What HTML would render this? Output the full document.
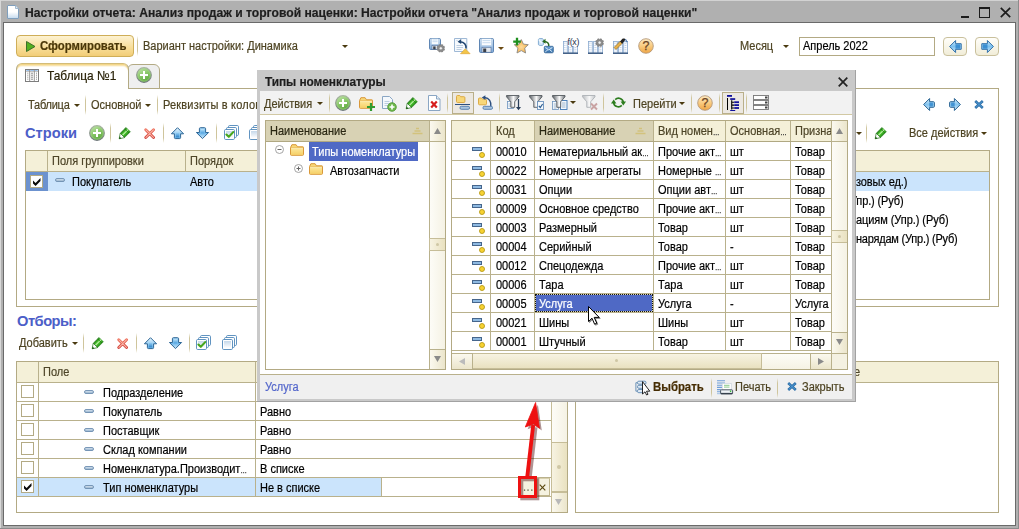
<!DOCTYPE html>
<html lang="ru"><head><meta charset="utf-8"><title>Настройки отчета</title>
<style>
*{box-sizing:border-box;margin:0;padding:0}
html,body{width:1019px;height:529px;overflow:hidden}
body{position:relative;background:#b0b0b0;font-family:"Liberation Sans",sans-serif;font-size:11px;color:#000;line-height:13px}
.a{position:absolute;white-space:nowrap}
.t{position:absolute;white-space:nowrap;height:13px;line-height:13px;font-size:12px;transform:scaleX(0.9167);transform-origin:0 0;-webkit-text-stroke:0.2px}
.hd{color:#4d4528}
.br{color:#4d4322}
.blue{color:#4c5ec8;font-weight:bold}
.hl{position:absolute;height:1px;background:#b9b18c}
.vl{position:absolute;width:1px;background:#b9b18c}
.el{font-size:7px;color:#333;-webkit-text-stroke:0.3px}
.sep{position:absolute;width:1px;background:linear-gradient(rgba(207,197,156,0),#cfc59c 25%,#cfc59c 75%,rgba(207,197,156,0))}
svg{position:absolute;overflow:visible}
</style></head><body>
<div class="a" style="left:0px;top:0px;width:1019px;height:1px;background:#d2d2d2"></div>
<div class="a" style="left:0px;top:0px;width:1px;height:529px;background:#d8d8d8"></div>
<div class="a" style="left:1018px;top:0px;width:1px;height:529px;background:#8c8c8c"></div>
<div class="a" style="left:0px;top:528px;width:1019px;height:1px;background:#8c8c8c"></div>
<div class="a" style="left:3px;top:22px;width:1013px;height:504px;background:#6a6a6a"></div>
<div class="a" style="left:4px;top:23px;width:1011px;height:502px;background:#fff"></div>
<div class="t " style="left:25px;top:6px;font-weight:bold;font-size:13px;transform:scaleX(0.934);color:#1e1e1e">Настройки отчета: Анализ продаж и торговой наценки: Настройки отчета "Анализ продаж и торговой наценки"</div>
<svg style="left:7px;top:5px" width="12" height="14" viewBox="0 0 12 14" ><defs><linearGradient id="gdoc" x1="0" y1="0" x2="0" y2="1"><stop offset="0" stop-color="#fff"/><stop offset="0.500" stop-color="#fff"/><stop offset="1" stop-color="#c4daee"/></linearGradient></defs><path d="M1 0.500h7.500l3 3v9.500q0 0.500 -0.500 0.500h-10q-0.500 0 -0.500-0.500v-12q0-0.500 0.500-0.500z" fill="url(#gdoc)" stroke="#7f9fbd"/><path d="M8.500 0.500v3h3" fill="#dfeaf4" stroke="#8fa9c2" stroke-width="0.800"/></svg>
<div class="a" style="left:961px;top:16px;width:8px;height:2px;background:#1c1c1c"></div>
<div class="a" style="left:979px;top:7px;width:11px;height:11px;border:1px solid #1c1c1c;border-top:2px solid #1c1c1c"></div>
<svg style="left:1000px;top:7px" width="11" height="11" viewBox="0 0 11 11" ><path d="M0.800 0.800l9.400 9.400M10.200 0.800l-9.400 9.400" stroke="#1c1c1c" stroke-width="1.700" fill="none"/></svg>
<div class="a" style="left:16px;top:35px;width:118px;height:22px;border:1px solid #cfae58;border-radius:4px;background:linear-gradient(#fdf2d2,#f8df9c 55%,#f2cd77)"></div>
<svg style="left:26px;top:41px" width="10" height="11" viewBox="0 0 10 11" ><path d="M0.500 0.500v10l8.500-5z" fill="#52b020" stroke="#3c6e2a" stroke-width="1" stroke-linejoin="round"/></svg>
<div class="t " style="left:40px;top:40px;font-weight:bold;font-size:12.4px;color:#4a3708">Сформировать</div>
<div class="sep" style="left:137px;top:36px;height:20px"></div>
<div class="t br" style="left:143px;top:40px;">Вариант настройки: Динамика</div>
<svg style="left:342px;top:45px" width="6" height="3" viewBox="0 0 6 3" ><path d="M0 0h6l-3 3z" fill="#4a3a10"/></svg>
<svg style="left:429px;top:38px" width="17" height="16" viewBox="0 0 17 16" ><defs><linearGradient id="f1" x1="0" y1="0" x2="0" y2="1"><stop offset="0" stop-color="#cfe2f4"/><stop offset="1" stop-color="#7fa9d8"/></linearGradient></defs><rect x="0.5" y="0.5" width="11" height="11" rx="1.2" fill="url(#f1)" stroke="#5f86b4"/><rect x="2.5" y="0.800" width="7" height="5.4" fill="#fbfdff" stroke="#a9c3df" stroke-width="0.5"/><path d="M3.500 2.0h5M3.500 3.7h5" stroke="#b9d2ea" stroke-width="0.8"/><rect x="3" y="7.4" width="6" height="3.8" fill="#e3e8ee" stroke="#54709a" stroke-width="0.6"/><rect x="4.200" y="8.4" width="2.4" height="2.9" fill="#3a3f48"/><path d="M14.02 11.22L15.68 11.91" stroke="#8d8d8d" stroke-width="1.9"/><path d="M12.72 12.52L13.41 14.18" stroke="#8d8d8d" stroke-width="1.9"/><path d="M10.88 12.52L10.19 14.18" stroke="#8d8d8d" stroke-width="1.9"/><path d="M9.58 11.22L7.92 11.91" stroke="#8d8d8d" stroke-width="1.9"/><path d="M9.58 9.38L7.92 8.69" stroke="#8d8d8d" stroke-width="1.9"/><path d="M10.88 8.08L10.19 6.42" stroke="#8d8d8d" stroke-width="1.9"/><path d="M12.72 8.08L13.41 6.42" stroke="#8d8d8d" stroke-width="1.9"/><path d="M14.02 9.38L15.68 8.69" stroke="#8d8d8d" stroke-width="1.9"/><circle cx="11.8" cy="10.3" r="3.3000000000000003" fill="#8d8d8d" stroke="#7a7a7a" stroke-width="0.4"/><circle cx="11.8" cy="10.3" r="1.50" fill="#f2f2f2" stroke="#6f6f6f" stroke-width="0.4"/></svg>
<svg style="left:454px;top:38px" width="17" height="17" viewBox="0 0 17 17" ><path d="M0.5 0.5h12.300v13h-12.300z" fill="#f7fafd" stroke="#9fb9d6"/><path d="M2.500 2.500h1" stroke="#b7c9de"/><path d="M2.500 7.500h6.500M2.500 9.500h6.500M2.500 11.500h5" stroke="#b7c9de" stroke-width="0.9"/><path d="M12 10.500c0.300-4-2.300-6.300-6-6.700" stroke="#1f4470" stroke-width="1.500" fill="none"/><path d="M3.600 3.800l3.600-2.700v5z" fill="#1f4470"/><path d="M11.300 10.800L16.100 15.700H6.500z" fill="#f3c548" stroke="#dba02c" stroke-width="0.600" stroke-linejoin="round"/></svg>
<svg style="left:479px;top:38px" width="15" height="15" viewBox="0 0 15 15" ><defs><linearGradient id="f2" x1="0" y1="0" x2="0" y2="1"><stop offset="0" stop-color="#cfe2f4"/><stop offset="1" stop-color="#7fa9d8"/></linearGradient></defs><rect x="0.5" y="0.5" width="14" height="14" rx="1.2" fill="url(#f2)" stroke="#5f86b4"/><rect x="2.5" y="0.800" width="10" height="6.8" fill="#fbfdff" stroke="#a9c3df" stroke-width="0.5"/><path d="M3.500 2.6h8M3.500 4.7h8" stroke="#b9d2ea" stroke-width="0.8"/><rect x="3" y="9.3" width="9" height="4.9" fill="#e3e8ee" stroke="#54709a" stroke-width="0.6"/><rect x="4.200" y="10.5" width="3.0" height="3.6" fill="#3a3f48"/></svg>
<svg style="left:498px;top:47px" width="6" height="3" viewBox="0 0 6 3" ><path d="M0 0h6l-3 3z" fill="#6b4a12"/></svg>
<svg style="left:512px;top:37px" width="17" height="17" viewBox="0 0 17 17" ><defs><radialGradient id="gstar" cx="0.5" cy="0.55" r="0.6"><stop offset="0" stop-color="#fddc9c"/><stop offset="1" stop-color="#f1a63a"/></radialGradient></defs><path d="M9.300 2.600l2.100 4.500 4.900.600-3.600 3.400.900 4.900-4.300-2.400-4.300 2.400.900-4.900-3.600-3.400 4.900-.600z" fill="url(#gstar)" stroke="#8d8a84" stroke-width="0.9" stroke-linejoin="round"/><path d="M5 0.800v7.600M1.200 4.600h7.600" stroke="#1f8f1f" stroke-width="2.300"/></svg>
<svg style="left:538px;top:38px" width="16" height="16" viewBox="0 0 16 16" ><defs><linearGradient id="genv" x1="0" y1="0" x2="0" y2="1"><stop offset="0" stop-color="#6fa6d8"/><stop offset="1" stop-color="#2f6aa6"/></linearGradient></defs><path d="M0.400 1.400c0-1.200 5-1.200 5 0v5.200c0 1.200-5 1.200-5 0z" fill="#cfe4f6" stroke="#6b9cc9" stroke-width="0.8"/><path d="M0.800 1.600l3 3.600" stroke="#fff" stroke-width="1.200" opacity="0.8"/><path d="M10.800 8.200c0.300-3-1.500-4.600-4.600-4.800" stroke="#2a6a1e" stroke-width="1.500" fill="none"/><path d="M4.200 3.400l3.300-2.600v5z" fill="#2a6a1e"/><rect x="6.300" y="8.300" width="9" height="6.500" rx="1" fill="url(#genv)" stroke="#2f5f92" stroke-width="0.8"/><path d="M7.300 9.500l3.500 2.400 3.500-2.400M7.300 13.800l2.600-2M14.300 13.800l-2.600-2" stroke="#e4f0fb" stroke-width="0.9" fill="none"/></svg>
<svg style="left:563px;top:38px" width="16" height="16" viewBox="0 0 16 16" ><rect x="0.4" y="3.4" width="3.9" height="11.8" fill="#fcfdff" stroke="#88a8cf" stroke-width="0.8"/><path d="M1.4 5.2h1.9" stroke="#9db7d6" stroke-width="0.9" stroke-dasharray="1 0.6"/><path d="M1.4 7.4h1.9" stroke="#9db7d6" stroke-width="0.9" stroke-dasharray="1 0.6"/><path d="M1.4 9.6h1.9" stroke="#9db7d6" stroke-width="0.9" stroke-dasharray="1 0.6"/><path d="M1.4 11.8h1.9" stroke="#9db7d6" stroke-width="0.9" stroke-dasharray="1 0.6"/><path d="M1.4 14.0h1.9" stroke="#9db7d6" stroke-width="0.9" stroke-dasharray="1 0.6"/><rect x="5.6" y="3.4" width="3.9" height="11.8" fill="#fcfdff" stroke="#88a8cf" stroke-width="0.8"/><path d="M6.6 5.2h1.9" stroke="#9db7d6" stroke-width="0.9" stroke-dasharray="1 0.6"/><path d="M6.6 7.4h1.9" stroke="#9db7d6" stroke-width="0.9" stroke-dasharray="1 0.6"/><path d="M6.6 9.6h1.9" stroke="#9db7d6" stroke-width="0.9" stroke-dasharray="1 0.6"/><path d="M6.6 11.8h1.9" stroke="#9db7d6" stroke-width="0.9" stroke-dasharray="1 0.6"/><path d="M6.6 14.0h1.9" stroke="#9db7d6" stroke-width="0.9" stroke-dasharray="1 0.6"/><rect x="10.7" y="3.4" width="3.9" height="11.8" fill="#fcfdff" stroke="#88a8cf" stroke-width="0.8"/><path d="M11.7 5.2h1.9" stroke="#9db7d6" stroke-width="0.9" stroke-dasharray="1 0.6"/><path d="M11.7 7.4h1.9" stroke="#9db7d6" stroke-width="0.9" stroke-dasharray="1 0.6"/><path d="M11.7 9.6h1.9" stroke="#9db7d6" stroke-width="0.9" stroke-dasharray="1 0.6"/><path d="M11.7 11.8h1.9" stroke="#9db7d6" stroke-width="0.9" stroke-dasharray="1 0.6"/><path d="M11.7 14.0h1.9" stroke="#9db7d6" stroke-width="0.9" stroke-dasharray="1 0.6"/><path d="M0 15.2h15" stroke="#2f4f78" stroke-width="1.300"/><rect x="5.200" y="0" width="10.500" height="8" fill="#fff"/><text x="10.300" y="7" text-anchor="middle" font-family="Liberation Sans,sans-serif" font-size="8.800" fill="#1d2f4d" letter-spacing="-0.300">f(x)</text></svg>
<svg style="left:588px;top:38px" width="17" height="16" viewBox="0 0 17 16" ><rect x="0.4" y="3.4" width="3.9" height="11.8" fill="#fcfdff" stroke="#88a8cf" stroke-width="0.8"/><path d="M1.4 5.2h1.9" stroke="#9db7d6" stroke-width="0.9" stroke-dasharray="1 0.6"/><path d="M1.4 7.4h1.9" stroke="#9db7d6" stroke-width="0.9" stroke-dasharray="1 0.6"/><path d="M1.4 9.6h1.9" stroke="#9db7d6" stroke-width="0.9" stroke-dasharray="1 0.6"/><path d="M1.4 11.8h1.9" stroke="#9db7d6" stroke-width="0.9" stroke-dasharray="1 0.6"/><path d="M1.4 14.0h1.9" stroke="#9db7d6" stroke-width="0.9" stroke-dasharray="1 0.6"/><rect x="5.6" y="3.4" width="3.9" height="11.8" fill="#fcfdff" stroke="#88a8cf" stroke-width="0.8"/><path d="M6.6 5.2h1.9" stroke="#9db7d6" stroke-width="0.9" stroke-dasharray="1 0.6"/><path d="M6.6 7.4h1.9" stroke="#9db7d6" stroke-width="0.9" stroke-dasharray="1 0.6"/><path d="M6.6 9.6h1.9" stroke="#9db7d6" stroke-width="0.9" stroke-dasharray="1 0.6"/><path d="M6.6 11.8h1.9" stroke="#9db7d6" stroke-width="0.9" stroke-dasharray="1 0.6"/><path d="M6.6 14.0h1.9" stroke="#9db7d6" stroke-width="0.9" stroke-dasharray="1 0.6"/><rect x="10.7" y="3.4" width="3.9" height="11.8" fill="#fcfdff" stroke="#88a8cf" stroke-width="0.8"/><path d="M11.7 5.2h1.9" stroke="#9db7d6" stroke-width="0.9" stroke-dasharray="1 0.6"/><path d="M11.7 7.4h1.9" stroke="#9db7d6" stroke-width="0.9" stroke-dasharray="1 0.6"/><path d="M11.7 9.6h1.9" stroke="#9db7d6" stroke-width="0.9" stroke-dasharray="1 0.6"/><path d="M11.7 11.8h1.9" stroke="#9db7d6" stroke-width="0.9" stroke-dasharray="1 0.6"/><path d="M11.7 14.0h1.9" stroke="#9db7d6" stroke-width="0.9" stroke-dasharray="1 0.6"/><path d="M0 15.2h15" stroke="#2f4f78" stroke-width="1.300"/><path d="M13.91 5.56L15.57 6.25" stroke="#8d8d8d" stroke-width="1.9"/><path d="M12.56 6.91L13.25 8.57" stroke="#8d8d8d" stroke-width="1.9"/><path d="M10.64 6.91L9.95 8.57" stroke="#8d8d8d" stroke-width="1.9"/><path d="M9.29 5.56L7.63 6.25" stroke="#8d8d8d" stroke-width="1.9"/><path d="M9.29 3.64L7.63 2.95" stroke="#8d8d8d" stroke-width="1.9"/><path d="M10.64 2.29L9.95 0.63" stroke="#8d8d8d" stroke-width="1.9"/><path d="M12.56 2.29L13.25 0.63" stroke="#8d8d8d" stroke-width="1.9"/><path d="M13.91 3.64L15.57 2.95" stroke="#8d8d8d" stroke-width="1.9"/><circle cx="11.6" cy="4.6" r="3.4" fill="#8d8d8d" stroke="#7a7a7a" stroke-width="0.4"/><circle cx="11.6" cy="4.6" r="1.53" fill="#f2f2f2" stroke="#6f6f6f" stroke-width="0.4"/></svg>
<svg style="left:613px;top:38px" width="16" height="16" viewBox="0 0 16 16" ><rect x="0.4" y="3.4" width="3.9" height="11.8" fill="#fcfdff" stroke="#88a8cf" stroke-width="0.8"/><path d="M1.4 5.2h1.9" stroke="#9db7d6" stroke-width="0.9" stroke-dasharray="1 0.6"/><path d="M1.4 7.4h1.9" stroke="#9db7d6" stroke-width="0.9" stroke-dasharray="1 0.6"/><path d="M1.4 9.6h1.9" stroke="#9db7d6" stroke-width="0.9" stroke-dasharray="1 0.6"/><path d="M1.4 11.8h1.9" stroke="#9db7d6" stroke-width="0.9" stroke-dasharray="1 0.6"/><path d="M1.4 14.0h1.9" stroke="#9db7d6" stroke-width="0.9" stroke-dasharray="1 0.6"/><rect x="5.6" y="3.4" width="3.9" height="11.8" fill="#fcfdff" stroke="#88a8cf" stroke-width="0.8"/><path d="M6.6 5.2h1.9" stroke="#9db7d6" stroke-width="0.9" stroke-dasharray="1 0.6"/><path d="M6.6 7.4h1.9" stroke="#9db7d6" stroke-width="0.9" stroke-dasharray="1 0.6"/><path d="M6.6 9.6h1.9" stroke="#9db7d6" stroke-width="0.9" stroke-dasharray="1 0.6"/><path d="M6.6 11.8h1.9" stroke="#9db7d6" stroke-width="0.9" stroke-dasharray="1 0.6"/><path d="M6.6 14.0h1.9" stroke="#9db7d6" stroke-width="0.9" stroke-dasharray="1 0.6"/><rect x="10.7" y="3.4" width="3.9" height="11.8" fill="#fcfdff" stroke="#88a8cf" stroke-width="0.8"/><path d="M11.7 5.2h1.9" stroke="#9db7d6" stroke-width="0.9" stroke-dasharray="1 0.6"/><path d="M11.7 7.4h1.9" stroke="#9db7d6" stroke-width="0.9" stroke-dasharray="1 0.6"/><path d="M11.7 9.6h1.9" stroke="#9db7d6" stroke-width="0.9" stroke-dasharray="1 0.6"/><path d="M11.7 11.8h1.9" stroke="#9db7d6" stroke-width="0.9" stroke-dasharray="1 0.6"/><path d="M11.7 14.0h1.9" stroke="#9db7d6" stroke-width="0.9" stroke-dasharray="1 0.6"/><path d="M0 15.2h15" stroke="#2f4f78" stroke-width="1.300"/><path d="M1 9.5l6.5-6.5 2 2-6.5 6.5z" fill="#e9b24a" stroke="#8c6a2a" stroke-width="0.7"/><path d="M7 3.5l2.2-2.6c1-.8 3-.6 3.4.6l-3.4 4.2z" fill="#222"/><path d="M12.4 1.3l1.8 2.8" stroke="#4f79ad" stroke-width="1.2"/></svg>
<svg style="left:638px;top:38px" width="16" height="16" viewBox="0 0 16 16" ><defs><linearGradient id="gh1" x1="0" y1="0" x2="0" y2="1"><stop offset="0" stop-color="#fdeac3"/><stop offset="0.5" stop-color="#f9cb80"/><stop offset="1" stop-color="#efa544"/></linearGradient></defs><circle cx="8" cy="8" r="7.300" fill="url(#gh1)" stroke="#b59a7c" stroke-width="0.9"/><text x="8" y="12.300" text-anchor="middle" font-family="Liberation Sans,sans-serif" font-size="12.500" fill="#6b4423" stroke="#6b4423" stroke-width="0.250">?</text></svg>
<div class="t br" style="left:740px;top:40px;">Месяц</div>
<svg style="left:783px;top:45px" width="6" height="3" viewBox="0 0 6 3" ><path d="M0 0h6l-3 3z" fill="#4a3a10"/></svg>
<div class="a" style="left:799px;top:37px;width:136px;height:19px;border:1px solid #b3aa84;background:#fff"></div>
<div class="t " style="left:803px;top:40px;">Апрель 2022</div>
<div class="a" style="left:943px;top:37px;width:24px;height:19px;border:1px solid #c9c09c;border-radius:4px;background:linear-gradient(#fffefa,#f1edd8)"></div>
<svg style="left:949px;top:40px" width="13" height="13" viewBox="0 0 13 13" ><defs><linearGradient id="gn2" x1="0" y1="0" x2="0" y2="1"><stop offset="0" stop-color="#c9e9fc"/><stop offset="0.5" stop-color="#7cc0ee"/><stop offset="1" stop-color="#cfeafb"/></linearGradient></defs><path d="M0.600 6.500l6-6v3.200h5.600v5.600h-5.600v3.200z" fill="url(#gn2)" stroke="#2f6fa8" stroke-width="1" stroke-linejoin="round"/><rect x="6.500" y="4.300" width="4.500" height="4.400" fill="#2f86cc" opacity="0.85"/></svg>
<div class="a" style="left:975px;top:37px;width:24px;height:19px;border:1px solid #c9c09c;border-radius:4px;background:linear-gradient(#fffefa,#f1edd8)"></div>
<svg style="left:981px;top:40px" width="13" height="13" viewBox="0 0 13 13" ><defs><linearGradient id="gn3" x1="0" y1="0" x2="0" y2="1"><stop offset="0" stop-color="#c9e9fc"/><stop offset="0.5" stop-color="#7cc0ee"/><stop offset="1" stop-color="#cfeafb"/></linearGradient></defs><path d="M12.400 6.500l-6-6v3.200h-5.600v5.600h5.600v3.200z" fill="url(#gn3)" stroke="#2f6fa8" stroke-width="1" stroke-linejoin="round"/><rect x="2" y="4.300" width="4.500" height="4.400" fill="#2f86cc" opacity="0.85"/></svg>
<div class="a" style="left:16px;top:88px;width:983px;height:219px;border:1px solid #b3aa84;background:#fff"></div>
<div class="a" style="left:127px;top:64px;width:33px;height:25px;border:1px solid #b3aa84;border-radius:6px 6px 0 0;background:#efefef"></div>
<div class="a" style="left:16px;top:63px;width:113px;height:26px;border:1px solid #b3aa84;border-bottom:none;border-top:1px solid #d3bc78;border-radius:6px 6px 0 0;background:#fff;box-shadow:inset 0 1px 0 #f3d68a,inset 0 2px 0 #f8e4b0,inset 0 3px 0 #fdf6e4"></div>
<svg style="left:25px;top:69px" width="14" height="13" viewBox="0 0 14 13" ><rect x="0.5" y="0.5" width="13" height="12" fill="#fff" stroke="#7d7d7d"/><path d="M1.300 1.500h3M5.300 1.500h3.600M9.900 1.500h2.800" stroke="#9cc3ee" stroke-width="1"/><path d="M1 2.500h12" stroke="#a9a9a9" stroke-width="0.700"/><path d="M4.700 1v11M9.300 1v11" stroke="#8a8a8a" stroke-width="0.900"/><path d="M2.300 4.2h1M6 4.2h2M11 4.2h1" stroke="#7f7f7f" stroke-width="0.900"/><path d="M2.300 6.2h1M6 6.2h2M11 6.2h1" stroke="#7f7f7f" stroke-width="0.900"/><path d="M2.300 8.2h1M6 8.2h2M11 8.2h1" stroke="#7f7f7f" stroke-width="0.900"/><path d="M2.300 10.2h1M6 10.2h2M11 10.2h1" stroke="#7f7f7f" stroke-width="0.900"/></svg>
<div class="t " style="left:47px;top:69px;font-size:13px;color:#2a2208">Таблица №1</div>
<svg style="left:136px;top:67px" width="16" height="16" viewBox="0 0 16 16" ><defs><linearGradient id="ga4" x1="0.25" y1="0" x2="0.75" y2="1"><stop offset="0" stop-color="#bfe2a8"/><stop offset="0.45" stop-color="#8ac86a"/><stop offset="1" stop-color="#58a23a"/></linearGradient><linearGradient id="ga4s" x1="0" y1="0" x2="0" y2="1"><stop offset="0" stop-color="#a9b5a2"/><stop offset="1" stop-color="#70787c"/></linearGradient></defs><circle cx="8" cy="8" r="7.3" fill="url(#ga4)" stroke="url(#ga4s)" stroke-width="1.2"/><circle cx="8" cy="8" r="6.2" fill="none" stroke="#a5d68a" stroke-width="0.7" opacity="0.8"/><path d="M7 4h2v3h3v2h-3v3h-2v-3h-3v-2h3z" fill="#fff"/></svg>
<div class="t br" style="left:28px;top:99px;letter-spacing:-0.25px">Таблица</div>
<svg style="left:74px;top:104px" width="6" height="3" viewBox="0 0 6 3" ><path d="M0 0h6l-3 3z" fill="#4a3a10"/></svg>
<div class="sep" style="left:85px;top:95px;height:20px"></div>
<div class="t br" style="left:91px;top:99px;">Основной</div>
<svg style="left:145px;top:104px" width="6" height="3" viewBox="0 0 6 3" ><path d="M0 0h6l-3 3z" fill="#4a3a10"/></svg>
<div class="sep" style="left:157px;top:95px;height:20px"></div>
<div class="t br" style="left:163px;top:99px;letter-spacing:0.2px">Реквизиты в колонках</div>
<div class="t blue" style="left:25px;top:125px;font-size:14.67px;height:16px;line-height:16px;transform:none;-webkit-text-stroke:0">Строки</div>
<svg style="left:89px;top:125px" width="16" height="16" viewBox="0 0 16 16" ><defs><linearGradient id="ga5" x1="0.25" y1="0" x2="0.75" y2="1"><stop offset="0" stop-color="#bfe2a8"/><stop offset="0.45" stop-color="#8ac86a"/><stop offset="1" stop-color="#58a23a"/></linearGradient><linearGradient id="ga5s" x1="0" y1="0" x2="0" y2="1"><stop offset="0" stop-color="#a9b5a2"/><stop offset="1" stop-color="#70787c"/></linearGradient></defs><circle cx="8" cy="8" r="7.3" fill="url(#ga5)" stroke="url(#ga5s)" stroke-width="1.2"/><circle cx="8" cy="8" r="6.2" fill="none" stroke="#a5d68a" stroke-width="0.7" opacity="0.8"/><path d="M7 4h2v3h3v2h-3v3h-2v-3h-3v-2h3z" fill="#fff"/></svg>
<div class="sep" style="left:110px;top:123px;height:20px"></div>
<svg style="left:118px;top:127px" width="13" height="13" viewBox="0 0 13 13" ><defs><linearGradient id="gpn6" gradientUnits="userSpaceOnUse" x1="5.200" y1="3.400" x2="9.500" y2="7.700"><stop offset="0" stop-color="#1d7a12"/><stop offset="0.300" stop-color="#4cc230"/><stop offset="0.480" stop-color="#c9f5b4"/><stop offset="0.620" stop-color="#4cc230"/><stop offset="1" stop-color="#1f8414"/></linearGradient></defs><path d="M8 0.400L12.400 4.800L6.600 10.600L2.200 6.200z" fill="url(#gpn6)" stroke="#1f7a14" stroke-width="0.500"/><path d="M6.700 1.800L11 6.100" stroke="#1d6e12" stroke-width="0.900" opacity="0.750"/><path d="M2.200 6.200L6.600 10.600L1.200 11.800z" fill="#fff" stroke="#1c6a12" stroke-width="0.700" stroke-linejoin="round"/><path d="M1 12L1.700 9.600L3.400 11.400z" fill="#165a0e"/></svg>
<svg style="left:144px;top:128px" width="12" height="12" viewBox="0 0 12 12" ><defs><linearGradient id="gx7" gradientUnits="userSpaceOnUse" x1="0" y1="0" x2="0" y2="12"><stop offset="0" stop-color="#f2705a"/><stop offset="1" stop-color="#c9302c"/></linearGradient></defs><path d="M1.700 1.700l7.900 7.900M9.600 1.700l-7.900 7.900" stroke="url(#gx7)" stroke-width="2.800" stroke-linecap="round" fill="none"/><path d="M1.900 1.900l7.500 7.500M9.400 1.900l-7.500 7.500" stroke="#f7b3a6" stroke-width="1.200" stroke-linecap="round" fill="none"/></svg>
<div class="sep" style="left:163px;top:123px;height:20px"></div>
<svg style="left:171px;top:127px" width="13" height="13" viewBox="0 0 13 13" ><defs><linearGradient id="gu8" x1="0" y1="0" x2="0" y2="1"><stop offset="0" stop-color="#eaf6fe"/><stop offset="0.5" stop-color="#9fd2f4"/><stop offset="1" stop-color="#5aaae4"/></linearGradient><linearGradient id="gu8b" x1="0" y1="0" x2="0" y2="1"><stop offset="0" stop-color="#8fcaf1"/><stop offset="1" stop-color="#2f84c9"/></linearGradient></defs><path d="M6.500 0.700L12.600 6.800H9.600V10.600Q9.600 11.600 8.600 11.600H4.400Q3.400 11.600 3.400 10.600V6.800H0.400z" fill="url(#gu8)" stroke="#2f6796" stroke-width="1" stroke-linejoin="round"/><rect x="4.900" y="6" width="3.200" height="4.300" fill="url(#gu8b)"/></svg>
<svg style="left:196px;top:127px" width="13" height="13" viewBox="0 0 13 13" ><defs><linearGradient id="gd9" x1="0" y1="0" x2="0" y2="1"><stop offset="0" stop-color="#a9d8f6"/><stop offset="0.5" stop-color="#6db6ea"/><stop offset="1" stop-color="#cfeafb"/></linearGradient><linearGradient id="gd9b" x1="0" y1="0" x2="0" y2="1"><stop offset="0" stop-color="#bfe3f9"/><stop offset="1" stop-color="#4c9fdc"/></linearGradient></defs><path d="M6.500 11.600L12.600 5.500H9.600V1.700Q9.600 0.700 8.600 0.700H4.400Q3.400 0.700 3.400 1.700V5.500H0.400z" fill="url(#gd9)" stroke="#2f6796" stroke-width="1" stroke-linejoin="round"/><rect x="4.900" y="2" width="3.200" height="4.300" fill="url(#gd9b)"/></svg>
<div class="sep" style="left:216px;top:123px;height:20px"></div>
<svg style="left:224px;top:125px" width="15" height="15" viewBox="0 0 15 15" ><defs><linearGradient id="gs10" x1="0" y1="0" x2="0" y2="1"><stop offset="0" stop-color="#c5d8ea"/><stop offset="1" stop-color="#fff"/></linearGradient></defs><rect x="4.5" y="0.5" width="10" height="10" rx="1.200" fill="#fff" stroke="#4f88ba" stroke-width="0.900"/><rect x="2.5" y="2.5" width="10" height="10" rx="1.200" fill="#fff" stroke="#4f88ba" stroke-width="0.900"/><rect x="0.5" y="4.5" width="10" height="10" rx="1.200" fill="#fff" stroke="#4f88ba" stroke-width="0.900"/><rect x="2" y="6" width="7" height="7" fill="url(#gs10)"/><path d="M2.400 9.500l2.400 2.300 4.400-4.700" stroke="#46a61c" stroke-width="2.100" fill="none" stroke-linecap="round" stroke-linejoin="round"/></svg>
<svg style="left:249px;top:125px" width="15" height="15" viewBox="0 0 15 15" ><defs><linearGradient id="gs11" x1="0" y1="0" x2="0" y2="1"><stop offset="0" stop-color="#c5d8ea"/><stop offset="1" stop-color="#fff"/></linearGradient></defs><rect x="4.5" y="0.5" width="10" height="10" rx="1.200" fill="#fff" stroke="#4f88ba" stroke-width="0.900"/><rect x="2.5" y="2.5" width="10" height="10" rx="1.200" fill="#fff" stroke="#4f88ba" stroke-width="0.900"/><rect x="0.5" y="4.5" width="10" height="10" rx="1.200" fill="#fff" stroke="#4f88ba" stroke-width="0.900"/><rect x="2" y="6" width="7" height="7" fill="url(#gs11)"/></svg>
<svg style="left:922.5px;top:98px" width="13" height="13" viewBox="0 0 13 13" ><defs><linearGradient id="gp12" x1="0" y1="0" x2="0" y2="1"><stop offset="0" stop-color="#d6eefc"/><stop offset="0.5" stop-color="#86c5ef"/><stop offset="1" stop-color="#d2ebfb"/></linearGradient></defs><path d="M0.600 6.500l6-6v3.200h3.800q1 0 1 1v3.600q0 1 -1 1h-3.800v3.200z" fill="url(#gp12)" stroke="#2c6593" stroke-width="1" stroke-linejoin="round"/><rect x="6.300" y="4.500" width="3.600" height="4" fill="#2f86cc" opacity="0.800"/></svg>
<svg style="left:947.7px;top:98px" width="13" height="13" viewBox="0 0 13 13" ><defs><linearGradient id="gp13" x1="0" y1="0" x2="0" y2="1"><stop offset="0" stop-color="#d6eefc"/><stop offset="0.5" stop-color="#86c5ef"/><stop offset="1" stop-color="#d2ebfb"/></linearGradient></defs><path d="M12.400 6.500l-6-6v3.200h-3.800q-1 0 -1 1v3.600q0 1 1 1h3.800v3.200z" fill="url(#gp13)" stroke="#2c6593" stroke-width="1" stroke-linejoin="round"/><rect x="3.100" y="4.500" width="3.600" height="4" fill="#2f86cc" opacity="0.800"/></svg>
<svg style="left:973.5px;top:100px" width="10" height="9" viewBox="0 0 10 9" ><path d="M1.200 1l7.600 7M8.800 1l-7.600 7" stroke="#2f6fa8" stroke-width="2.600" fill="none"/><path d="M1.600 1.400l6.800 6.200M8.400 1.400l-6.800 6.200" stroke="#4f9bd6" stroke-width="1" fill="none"/></svg>
<svg style="left:856px;top:132px" width="6" height="3" viewBox="0 0 6 3" ><path d="M0 0h6l-3 3z" fill="#4a3a10"/></svg>
<div class="sep" style="left:866px;top:123px;height:20px"></div>
<svg style="left:874px;top:127px" width="13" height="13" viewBox="0 0 13 13" ><defs><linearGradient id="gpn14" gradientUnits="userSpaceOnUse" x1="5.200" y1="3.400" x2="9.500" y2="7.700"><stop offset="0" stop-color="#1d7a12"/><stop offset="0.300" stop-color="#4cc230"/><stop offset="0.480" stop-color="#c9f5b4"/><stop offset="0.620" stop-color="#4cc230"/><stop offset="1" stop-color="#1f8414"/></linearGradient></defs><path d="M8 0.400L12.400 4.800L6.600 10.600L2.200 6.200z" fill="url(#gpn14)" stroke="#1f7a14" stroke-width="0.500"/><path d="M6.700 1.800L11 6.100" stroke="#1d6e12" stroke-width="0.900" opacity="0.750"/><path d="M2.200 6.200L6.600 10.600L1.200 11.800z" fill="#fff" stroke="#1c6a12" stroke-width="0.700" stroke-linejoin="round"/><path d="M1 12L1.700 9.600L3.400 11.400z" fill="#165a0e"/></svg>
<div class="t br" style="left:909px;top:127px;">Все действия</div>
<svg style="left:981px;top:132px" width="6" height="3" viewBox="0 0 6 3" ><path d="M0 0h6l-3 3z" fill="#4a3a10"/></svg>
<div class="a" style="left:25px;top:150px;width:965px;height:150px;border:1px solid #b3aa84;background:#fff"></div>
<div class="a" style="left:26px;top:151px;width:963px;height:20px;background:#f4f0d8"></div>
<div class="hl" style="left:26px;top:171px;width:963px;"></div>
<div class="a" style="left:26px;top:172px;width:963px;height:19px;background:#cbe4fc"></div>
<div class="a" style="left:26px;top:172px;width:22px;height:19px;background:#6c92cf"></div>
<div class="a" style="left:30px;top:175px;width:13px;height:13px;background:#fff;border:1px solid #b3aa84"></div>
<svg style="left:32.7px;top:177.5px" width="8" height="8" viewBox="0 0 8 8" ><path d="M0 2.500L2.600 5L7.500 0V3L2.600 7.900L0 5.400z" fill="#0a0a0a"/></svg>
<div class="vl" style="left:47px;top:151px;height:20px;"></div>
<div class="vl" style="left:185px;top:151px;height:20px;"></div>
<div class="t hd" style="left:52px;top:155px;">Поля группировки</div>
<div class="t hd" style="left:190px;top:155px;">Порядок</div>
<svg style="left:55px;top:178px" width="10" height="4" viewBox="0 0 10 4" ><defs><linearGradient id="gdash" x1="0" y1="0" x2="0" y2="1"><stop offset="0" stop-color="#dfeaf4"/><stop offset="1" stop-color="#8fadc9"/></linearGradient></defs><rect x="0.5" y="0.5" width="9" height="3" rx="1.500" fill="url(#gdash)" stroke="#6c8db0" stroke-width="0.9"/></svg>
<div class="t " style="left:72px;top:176px;">Покупатель</div>
<div class="t " style="left:190px;top:176px;">Авто</div>
<div class="t " style="left:855.5px;top:176px;letter-spacing:-0.12px">зовых ед.)</div>
<div class="t " style="left:849.5px;top:195px;letter-spacing:-0.15px">Упр.) (Руб)</div>
<div class="t " style="left:855.5px;top:214px;letter-spacing:-0.07px">ациям (Упр.) (Руб)</div>
<div class="t " style="left:855.5px;top:233px;letter-spacing:-0.24px">нарядам (Упр.) (Руб)</div>
<div class="t blue" style="left:17px;top:313px;font-size:14.67px;letter-spacing:-0.5px;height:16px;line-height:16px;transform:none;-webkit-text-stroke:0">Отборы:</div>
<div class="t br" style="left:19px;top:337px;">Добавить</div>
<svg style="left:72px;top:342px" width="6" height="3" viewBox="0 0 6 3" ><path d="M0 0h6l-3 3z" fill="#4a3a10"/></svg>
<div class="sep" style="left:83px;top:333px;height:20px"></div>
<svg style="left:91px;top:337px" width="13" height="13" viewBox="0 0 13 13" ><defs><linearGradient id="gpn15" gradientUnits="userSpaceOnUse" x1="5.200" y1="3.400" x2="9.500" y2="7.700"><stop offset="0" stop-color="#1d7a12"/><stop offset="0.300" stop-color="#4cc230"/><stop offset="0.480" stop-color="#c9f5b4"/><stop offset="0.620" stop-color="#4cc230"/><stop offset="1" stop-color="#1f8414"/></linearGradient></defs><path d="M8 0.400L12.400 4.800L6.600 10.600L2.200 6.200z" fill="url(#gpn15)" stroke="#1f7a14" stroke-width="0.500"/><path d="M6.700 1.800L11 6.100" stroke="#1d6e12" stroke-width="0.900" opacity="0.750"/><path d="M2.200 6.200L6.600 10.600L1.200 11.800z" fill="#fff" stroke="#1c6a12" stroke-width="0.700" stroke-linejoin="round"/><path d="M1 12L1.700 9.600L3.400 11.400z" fill="#165a0e"/></svg>
<svg style="left:117px;top:338px" width="12" height="12" viewBox="0 0 12 12" ><defs><linearGradient id="gx16" gradientUnits="userSpaceOnUse" x1="0" y1="0" x2="0" y2="12"><stop offset="0" stop-color="#f2705a"/><stop offset="1" stop-color="#c9302c"/></linearGradient></defs><path d="M1.700 1.700l7.900 7.900M9.600 1.700l-7.900 7.900" stroke="url(#gx16)" stroke-width="2.800" stroke-linecap="round" fill="none"/><path d="M1.900 1.900l7.500 7.500M9.400 1.900l-7.500 7.500" stroke="#f7b3a6" stroke-width="1.200" stroke-linecap="round" fill="none"/></svg>
<div class="sep" style="left:136px;top:333px;height:20px"></div>
<svg style="left:144px;top:337px" width="13" height="13" viewBox="0 0 13 13" ><defs><linearGradient id="gu17" x1="0" y1="0" x2="0" y2="1"><stop offset="0" stop-color="#eaf6fe"/><stop offset="0.5" stop-color="#9fd2f4"/><stop offset="1" stop-color="#5aaae4"/></linearGradient><linearGradient id="gu17b" x1="0" y1="0" x2="0" y2="1"><stop offset="0" stop-color="#8fcaf1"/><stop offset="1" stop-color="#2f84c9"/></linearGradient></defs><path d="M6.500 0.700L12.600 6.800H9.600V10.600Q9.600 11.600 8.600 11.600H4.400Q3.400 11.600 3.400 10.600V6.800H0.400z" fill="url(#gu17)" stroke="#2f6796" stroke-width="1" stroke-linejoin="round"/><rect x="4.900" y="6" width="3.200" height="4.300" fill="url(#gu17b)"/></svg>
<svg style="left:169px;top:337px" width="13" height="13" viewBox="0 0 13 13" ><defs><linearGradient id="gd18" x1="0" y1="0" x2="0" y2="1"><stop offset="0" stop-color="#a9d8f6"/><stop offset="0.5" stop-color="#6db6ea"/><stop offset="1" stop-color="#cfeafb"/></linearGradient><linearGradient id="gd18b" x1="0" y1="0" x2="0" y2="1"><stop offset="0" stop-color="#bfe3f9"/><stop offset="1" stop-color="#4c9fdc"/></linearGradient></defs><path d="M6.500 11.600L12.600 5.500H9.600V1.700Q9.600 0.700 8.600 0.700H4.400Q3.400 0.700 3.400 1.700V5.500H0.400z" fill="url(#gd18)" stroke="#2f6796" stroke-width="1" stroke-linejoin="round"/><rect x="4.900" y="2" width="3.200" height="4.300" fill="url(#gd18b)"/></svg>
<div class="sep" style="left:189px;top:333px;height:20px"></div>
<svg style="left:196px;top:335px" width="15" height="15" viewBox="0 0 15 15" ><defs><linearGradient id="gs19" x1="0" y1="0" x2="0" y2="1"><stop offset="0" stop-color="#c5d8ea"/><stop offset="1" stop-color="#fff"/></linearGradient></defs><rect x="4.5" y="0.5" width="10" height="10" rx="1.200" fill="#fff" stroke="#4f88ba" stroke-width="0.900"/><rect x="2.5" y="2.5" width="10" height="10" rx="1.200" fill="#fff" stroke="#4f88ba" stroke-width="0.900"/><rect x="0.5" y="4.5" width="10" height="10" rx="1.200" fill="#fff" stroke="#4f88ba" stroke-width="0.900"/><rect x="2" y="6" width="7" height="7" fill="url(#gs19)"/><path d="M2.400 9.500l2.400 2.300 4.400-4.700" stroke="#46a61c" stroke-width="2.100" fill="none" stroke-linecap="round" stroke-linejoin="round"/></svg>
<svg style="left:222px;top:335px" width="15" height="15" viewBox="0 0 15 15" ><defs><linearGradient id="gs20" x1="0" y1="0" x2="0" y2="1"><stop offset="0" stop-color="#c5d8ea"/><stop offset="1" stop-color="#fff"/></linearGradient></defs><rect x="4.5" y="0.5" width="10" height="10" rx="1.200" fill="#fff" stroke="#4f88ba" stroke-width="0.900"/><rect x="2.5" y="2.5" width="10" height="10" rx="1.200" fill="#fff" stroke="#4f88ba" stroke-width="0.900"/><rect x="0.5" y="4.5" width="10" height="10" rx="1.200" fill="#fff" stroke="#4f88ba" stroke-width="0.900"/><rect x="2" y="6" width="7" height="7" fill="url(#gs20)"/></svg>
<div class="a" style="left:16px;top:361px;width:552px;height:152px;border:1px solid #b3aa84;background:#fff"></div>
<div class="a" style="left:17px;top:362px;width:550px;height:20px;background:#f4f0d8"></div>
<div class="hl" style="left:17px;top:382px;width:550px;"></div>
<div class="t hd" style="left:43px;top:366px;">Поле</div>
<div class="vl" style="left:38px;top:362px;height:135px;"></div>
<div class="vl" style="left:255px;top:362px;height:135px;"></div>
<div class="hl" style="left:17px;top:401px;width:534px;"></div>
<div class="a" style="left:21px;top:385px;width:13px;height:13px;background:#fff;border:1px solid #b3aa84"></div>
<svg style="left:84px;top:390px" width="10" height="4" viewBox="0 0 10 4" ><defs><linearGradient id="gdash" x1="0" y1="0" x2="0" y2="1"><stop offset="0" stop-color="#dfeaf4"/><stop offset="1" stop-color="#8fadc9"/></linearGradient></defs><rect x="0.5" y="0.5" width="9" height="3" rx="1.500" fill="url(#gdash)" stroke="#6c8db0" stroke-width="0.9"/></svg>
<div class="t " style="left:103px;top:387px;">Подразделение</div>
<div class="t " style="left:260px;top:387px;">Равно</div>
<div class="hl" style="left:17px;top:420px;width:534px;"></div>
<div class="a" style="left:21px;top:404px;width:13px;height:13px;background:#fff;border:1px solid #b3aa84"></div>
<svg style="left:84px;top:409px" width="10" height="4" viewBox="0 0 10 4" ><defs><linearGradient id="gdash" x1="0" y1="0" x2="0" y2="1"><stop offset="0" stop-color="#dfeaf4"/><stop offset="1" stop-color="#8fadc9"/></linearGradient></defs><rect x="0.5" y="0.5" width="9" height="3" rx="1.500" fill="url(#gdash)" stroke="#6c8db0" stroke-width="0.9"/></svg>
<div class="t " style="left:103px;top:406px;">Покупатель</div>
<div class="t " style="left:260px;top:406px;">Равно</div>
<div class="hl" style="left:17px;top:439px;width:534px;"></div>
<div class="a" style="left:21px;top:423px;width:13px;height:13px;background:#fff;border:1px solid #b3aa84"></div>
<svg style="left:84px;top:428px" width="10" height="4" viewBox="0 0 10 4" ><defs><linearGradient id="gdash" x1="0" y1="0" x2="0" y2="1"><stop offset="0" stop-color="#dfeaf4"/><stop offset="1" stop-color="#8fadc9"/></linearGradient></defs><rect x="0.5" y="0.5" width="9" height="3" rx="1.500" fill="url(#gdash)" stroke="#6c8db0" stroke-width="0.9"/></svg>
<div class="t " style="left:103px;top:425px;">Поставщик</div>
<div class="t " style="left:260px;top:425px;">Равно</div>
<div class="hl" style="left:17px;top:458px;width:534px;"></div>
<div class="a" style="left:21px;top:442px;width:13px;height:13px;background:#fff;border:1px solid #b3aa84"></div>
<svg style="left:84px;top:447px" width="10" height="4" viewBox="0 0 10 4" ><defs><linearGradient id="gdash" x1="0" y1="0" x2="0" y2="1"><stop offset="0" stop-color="#dfeaf4"/><stop offset="1" stop-color="#8fadc9"/></linearGradient></defs><rect x="0.5" y="0.5" width="9" height="3" rx="1.500" fill="url(#gdash)" stroke="#6c8db0" stroke-width="0.9"/></svg>
<div class="t " style="left:103px;top:444px;">Склад компании</div>
<div class="t " style="left:260px;top:444px;">Равно</div>
<div class="hl" style="left:17px;top:477px;width:534px;"></div>
<div class="a" style="left:21px;top:461px;width:13px;height:13px;background:#fff;border:1px solid #b3aa84"></div>
<svg style="left:84px;top:466px" width="10" height="4" viewBox="0 0 10 4" ><defs><linearGradient id="gdash" x1="0" y1="0" x2="0" y2="1"><stop offset="0" stop-color="#dfeaf4"/><stop offset="1" stop-color="#8fadc9"/></linearGradient></defs><rect x="0.5" y="0.5" width="9" height="3" rx="1.500" fill="url(#gdash)" stroke="#6c8db0" stroke-width="0.9"/></svg>
<div class="t " style="left:103px;top:463px;">Номенклатура.Производит<span class="el">…</span></div>
<div class="t " style="left:260px;top:463px;">В списке</div>
<div class="a" style="left:17px;top:478px;width:364px;height:18px;background:#cbe4fc"></div>
<div class="vl" style="left:38px;top:478px;height:18px;"></div>
<div class="vl" style="left:255px;top:478px;height:18px;"></div>
<div class="vl" style="left:381px;top:478px;height:18px;"></div>
<div class="hl" style="left:17px;top:496px;width:534px;"></div>
<div class="a" style="left:21px;top:480px;width:13px;height:13px;background:#fff;border:1px solid #b3aa84"></div>
<svg style="left:23.7px;top:482.5px" width="8" height="8" viewBox="0 0 8 8" ><path d="M0 2.500L2.600 5L7.500 0V3L2.600 7.900L0 5.400z" fill="#0a0a0a"/></svg>
<svg style="left:84px;top:485px" width="10" height="4" viewBox="0 0 10 4" ><defs><linearGradient id="gdash" x1="0" y1="0" x2="0" y2="1"><stop offset="0" stop-color="#dfeaf4"/><stop offset="1" stop-color="#8fadc9"/></linearGradient></defs><rect x="0.5" y="0.5" width="9" height="3" rx="1.500" fill="url(#gdash)" stroke="#6c8db0" stroke-width="0.9"/></svg>
<div class="t " style="left:103px;top:482px;">Тип номенклатуры</div>
<div class="t " style="left:260px;top:482px;">Не в списке</div>
<div class="a" style="left:551px;top:362px;width:16px;height:150px;background:linear-gradient(90deg,#fdfcf7,#f5f2e4);border-left:1px solid #c6bd98"></div>
<div class="a" style="left:551px;top:442px;width:16px;height:50px;background:linear-gradient(90deg,#f7f3e2,#e9e1c0);border:1px solid #c6bd98;border-right:none"></div>
<div class="a" style="left:557px;top:465px;width:4px;height:4px;border-radius:2px;background:#cfc7a5"></div>
<div class="a" style="left:551px;top:492px;width:16px;height:20px;background:linear-gradient(90deg,#fbf9ef,#ebe5cb);border-left:1px solid #c6bd98;border-top:1px solid #c6bd98"></div>
<svg style="left:555px;top:499px" width="7" height="6" viewBox="0 0 7 6" ><path d="M3.5 6l3.5-6h-7z" fill="#b8b8b8"/></svg>
<div class="a" style="left:519px;top:478px;width:18px;height:18px;background:#f5f2e0;border:1px solid #d2c9a4"></div>
<div class="t " style="left:523px;top:481px;color:#77735a;letter-spacing:0.6px">...</div>
<div class="a" style="left:537px;top:478px;width:13px;height:18px;background:#f5f2e0;border:1px solid #d8d0ae;border-right-color:#bfb58c;border-bottom-color:#bfb58c"></div>
<svg style="left:539px;top:484px" width="7" height="7" viewBox="0 0 7 7" ><path d="M0.700 0.700l5.600 5.600M6.300 0.700l-5.600 5.600" stroke="#5c4a10" stroke-width="1.150" fill="none"/></svg>
<div class="a" style="left:575px;top:361px;width:424px;height:152px;border:1px solid #b3aa84;background:#fff"></div>
<div class="a" style="left:576px;top:362px;width:422px;height:20px;background:#f4f0d8"></div>
<div class="hl" style="left:576px;top:382px;width:422px;"></div>
<div class="t hd" style="left:854px;top:366px;">е</div>
<svg style="left:0;top:0" width="1019" height="529" viewBox="0 0 1019 529"><g opacity="0.420" transform="translate(2.300,2.300)"><rect x="519.500" y="477.500" width="16" height="19" fill="none" stroke="#400" stroke-width="3"/><path d="M527.200 477L533.200 425" stroke="#400" stroke-width="4"/><path d="M535.600 402.500L539.500 428.300L533.600 424L525.300 427z" fill="#400"/></g><rect x="519.500" y="477.500" width="16" height="19" fill="none" stroke="#ee1111" stroke-width="3"/><path d="M527.200 477L533.200 425" stroke="#ee1111" stroke-width="3.800"/><path d="M535.600 402.500L539.500 428.300L533.600 424L525.300 427z" fill="#ee1111" stroke="#ee1111" stroke-width="0.800" stroke-linejoin="round"/></svg>
<div class="a" style="left:257px;top:70px;width:599px;height:332px;background:#c9c9c9;border-right:1px solid #a2a2a2;border-bottom:1px solid #a2a2a2"></div>
<div class="a" style="left:260px;top:91px;width:592px;height:284px;background:#fff"></div>
<div class="a" style="left:260px;top:91px;width:592px;height:23px;background:#f2f2f2"></div>
<div class="hl" style="left:260px;top:114px;width:592px;background:#d2c9a4"></div>
<div class="hl" style="left:260px;top:374px;width:592px;background:#b9b18c"></div>
<div class="a" style="left:260px;top:375px;width:592px;height:24px;background:#f0f0f0"></div>
<div class="t " style="left:265px;top:75px;font-weight:bold;font-size:13px;letter-spacing:-0.1px;color:#1e1e1e">Типы номенклатуры</div>
<svg style="left:837.5px;top:76.5px" width="10" height="10" viewBox="0 0 10 10" ><path d="M0.7 0.7l8.6 8.6M9.3 0.7l-8.6 8.6" stroke="#222" stroke-width="1.7" fill="none"/></svg>
<div class="t br" style="left:264px;top:98px;">Действия</div>
<svg style="left:317px;top:102px" width="6" height="3" viewBox="0 0 6 3" ><path d="M0 0h6l-3 3z" fill="#4a3a10"/></svg>
<div class="sep" style="left:329px;top:93px;height:20px"></div>
<svg style="left:335px;top:95px" width="16" height="16" viewBox="0 0 16 16" ><defs><linearGradient id="ga21" x1="0.25" y1="0" x2="0.75" y2="1"><stop offset="0" stop-color="#bfe2a8"/><stop offset="0.45" stop-color="#8ac86a"/><stop offset="1" stop-color="#58a23a"/></linearGradient><linearGradient id="ga21s" x1="0" y1="0" x2="0" y2="1"><stop offset="0" stop-color="#a9b5a2"/><stop offset="1" stop-color="#70787c"/></linearGradient></defs><circle cx="8" cy="8" r="7.3" fill="url(#ga21)" stroke="url(#ga21s)" stroke-width="1.2"/><circle cx="8" cy="8" r="6.2" fill="none" stroke="#a5d68a" stroke-width="0.7" opacity="0.8"/><path d="M7 4h2v3h3v2h-3v3h-2v-3h-3v-2h3z" fill="#fff"/></svg>
<svg style="left:359px;top:97px" width="14" height="12" viewBox="0 0 14 12" ><defs><linearGradient id="gf22" x1="0" y1="0" x2="0" y2="1"><stop offset="0" stop-color="#fce79a"/><stop offset="1" stop-color="#f6d068"/></linearGradient></defs><path d="M0.500 3.600L1.900 0.700H6.100L7.500 2.800H12.900Q13.500 2.800 13.500 3.400V10.500Q13.500 11.300 12.700 11.300H1.300Q0.500 11.300 0.500 10.500z" fill="#f7d777" stroke="#d9983a" stroke-width="1" stroke-linejoin="round"/><path d="M1.100 4.500H12.900V10.700H1.100z" fill="url(#gf22)"/><path d="M1 3.700H13" stroke="#e3ad52" stroke-width="0.600"/><path d="M1.100 4.400H12.900" stroke="#fdf2c4" stroke-width="0.700"/></svg>
<svg style="left:367px;top:103px" width="8" height="8" viewBox="0 0 8 8" ><path d="M4 0v8M0 4h8" stroke="#2f9b2f" stroke-width="2.2"/></svg>
<svg style="left:382px;top:96px" width="15" height="16" viewBox="0 0 15 16" ><path d="M0.5 0.5h7l3 3v9h-10z" fill="#f4f8fc" stroke="#8aa6c4"/><path d="M2.5 5.500h5M2.5 7.5h5M2.5 9.5h4" stroke="#b7c9de" stroke-width="0.9"/><circle cx="10" cy="11" r="4.3" fill="#6fb84c" stroke="#4b9430" stroke-width="0.8"/><path d="M10 8.5v5M7.500 11h5" stroke="#fff" stroke-width="1.6"/></svg>
<svg style="left:405px;top:97px" width="13" height="13" viewBox="0 0 13 13" ><defs><linearGradient id="gpn23" gradientUnits="userSpaceOnUse" x1="5.200" y1="3.400" x2="9.500" y2="7.700"><stop offset="0" stop-color="#1d7a12"/><stop offset="0.300" stop-color="#4cc230"/><stop offset="0.480" stop-color="#c9f5b4"/><stop offset="0.620" stop-color="#4cc230"/><stop offset="1" stop-color="#1f8414"/></linearGradient></defs><path d="M8 0.400L12.400 4.800L6.600 10.600L2.200 6.200z" fill="url(#gpn23)" stroke="#1f7a14" stroke-width="0.500"/><path d="M6.700 1.800L11 6.100" stroke="#1d6e12" stroke-width="0.900" opacity="0.750"/><path d="M2.200 6.200L6.600 10.600L1.200 11.800z" fill="#fff" stroke="#1c6a12" stroke-width="0.700" stroke-linejoin="round"/><path d="M1 12L1.700 9.600L3.400 11.400z" fill="#165a0e"/></svg>
<svg style="left:428px;top:95px" width="13" height="16" viewBox="0 0 13 16" ><path d="M0.5 0.5h8l3.500 3.500v11.500h-11.500z" fill="#fff" stroke="#8aa6c4"/><path d="M8.5 0.5v3.500h3.500" fill="#e3edf6" stroke="#8aa6c4"/><path d="M3.2 6.500l5.600 6M8.800 6.500l-5.600 6" stroke="#d61f1f" stroke-width="2.2"/></svg>
<div class="sep" style="left:447px;top:93px;height:20px"></div>
<div class="a" style="left:452px;top:92px;width:22px;height:22px;background:#ece8e1;border:1px solid #b9af8a"></div>
<svg style="left:455px;top:95px" width="16" height="15" viewBox="0 0 16 15" ><path d="M1.500 1.500c0-.6.400-1 1-1h2.200l1 1.200h3.200c.6 0 1 .4 1 1v3.800c0 .6-.4 1-1 1h-6.400c-.6 0-1-.4-1-1z" fill="#f7d77a" stroke="#d9a43a" stroke-width="0.9"/><path d="M0 9.500h15" stroke="#2d4f7f" stroke-width="1"/><rect x="5" y="11.300" width="9.500" height="3" rx="1.300" fill="#a9c4dd" stroke="#4f79ad" stroke-width="0.9"/></svg>
<svg style="left:477px;top:95px" width="17" height="16" viewBox="0 0 17 16" ><path d="M1.500 4c0-.6.400-1 1-1h2l1 1.200h3c.6 0 1 .4 1 1v3.600c0 .6-.4 1-1 1h-6c-.6 0-1-.4-1-1z" fill="#f7d77a" stroke="#d9a43a" stroke-width="0.9"/><path d="M13.800 11.500c.6-5-1.500-8.600-6.300-9" stroke="#2d4f7f" stroke-width="1.400" fill="none"/><path d="M4.800 2.600l3.600-2.400v4.900z" fill="#2d4f7f"/><rect x="6" y="11.300" width="9.500" height="3" rx="1.300" fill="#a9c4dd" stroke="#4f79ad" stroke-width="0.9"/></svg>
<div class="sep" style="left:499px;top:93px;height:20px"></div>
<svg style="left:506px;top:95px" width="15" height="16" viewBox="0 0 15 16" ><defs><linearGradient id="gfu24" x1="0" y1="0" x2="1" y2="0"><stop offset="0" stop-color="#5a5f65"/><stop offset="0.55" stop-color="#fbfbfb"/><stop offset="1" stop-color="#6d7278"/></linearGradient></defs><rect x="1.500" y="6.500" width="6" height="7" fill="#f4f8fc" stroke="#6d93bd" stroke-width="0.8"/><path d="M2.500 9h2M2.500 11h2" stroke="#8aa6c4" stroke-width="0.8"/><path d="M0.5 0.5h12.500v1.300l-4.300 5v5.500h-3.900v-5.500l-4.300-5z" fill="url(#gfu24)" stroke="#565b60" stroke-width="0.9" stroke-linejoin="round"/><path d="M12.500 4v9.500" stroke="#2a3f5a" stroke-width="1.300"/><path d="M10 12l2.500 3.300 2.500-3.300z" fill="#2a3f5a"/></svg>
<svg style="left:529px;top:95px" width="15" height="16" viewBox="0 0 15 16" ><defs><linearGradient id="gfu25" x1="0" y1="0" x2="1" y2="0"><stop offset="0" stop-color="#5a5f65"/><stop offset="0.55" stop-color="#fbfbfb"/><stop offset="1" stop-color="#6d7278"/></linearGradient></defs><path d="M0.5 0.5h12.500v1.300l-4.300 5v5.500h-3.900v-5.500l-4.300-5z" fill="url(#gfu25)" stroke="#565b60" stroke-width="0.9" stroke-linejoin="round"/><rect x="8.500" y="6.500" width="6" height="8" fill="#f4f8fc" stroke="#6d93bd" stroke-width="0.9"/><path d="M9.800 10.800l1.500 1.700 2.300-3.500" stroke="#2d5d91" stroke-width="1.200" fill="none"/></svg>
<svg style="left:552px;top:95px" width="16" height="16" viewBox="0 0 16 16" ><defs><linearGradient id="gfu26" x1="0" y1="0" x2="1" y2="0"><stop offset="0" stop-color="#5a5f65"/><stop offset="0.55" stop-color="#fbfbfb"/><stop offset="1" stop-color="#6d7278"/></linearGradient></defs><rect x="0.500" y="6.500" width="6" height="8" fill="#f4f8fc" stroke="#6d93bd" stroke-width="0.8"/><path d="M1.800 9h2.500M1.800 11h2.500M1.800 13h2.500" stroke="#8aa6c4" stroke-width="0.8"/><rect x="8.500" y="5.500" width="6.500" height="9" fill="#f4f8fc" stroke="#3f78b4" stroke-width="0.9"/><path d="M10 8h3.500M10 10h3.500M10 12h3.500" stroke="#8aa6c4" stroke-width="0.8"/><path d="M0.5 0.5h12.500v1.300l-4.300 5v5.500h-3.900v-5.500l-4.300-5z" fill="url(#gfu26)" stroke="#565b60" stroke-width="0.9" stroke-linejoin="round"/></svg>
<svg style="left:570px;top:101px" width="6" height="3" viewBox="0 0 6 3" ><path d="M0 0h6l-3 3z" fill="#4a3a10"/></svg>
<svg style="left:582px;top:95px" width="16" height="16" viewBox="0 0 16 16" ><defs><linearGradient id="gfu27" x1="0" y1="0" x2="1" y2="0"><stop offset="0" stop-color="#b9bcc0"/><stop offset="0.55" stop-color="#f8f8f8"/><stop offset="1" stop-color="#c4c7ca"/></linearGradient></defs><path d="M0.5 0.5h12.500v1.300l-4.300 5v5.500h-3.900v-5.500l-4.300-5z" fill="url(#gfu27)" stroke="#adb1b5" stroke-width="0.9" stroke-linejoin="round"/><path d="M9 8.500l6 6M15 8.500l-6 6" stroke="#c9a3a3" stroke-width="1.900"/></svg>
<div class="sep" style="left:603px;top:93px;height:20px"></div>
<svg style="left:611px;top:97px" width="15" height="11" viewBox="0 0 15 11" ><path d="M4.200 2.600A4.700 4.400 0 0 1 12.300 5.200" stroke="#2d7d1f" stroke-width="1.700" fill="none"/><path d="M9.600 4.600h5.400l-2.700 4z" fill="#2d7d1f"/><path d="M10.800 8.400A4.700 4.400 0 0 1 2.700 5.800" stroke="#2d7d1f" stroke-width="1.700" fill="none"/><path d="M5.400 6.400h-5.400l2.700-4z" fill="#2d7d1f"/></svg>
<div class="t br" style="left:633px;top:98px;">Перейти</div>
<svg style="left:679px;top:102px" width="6" height="3" viewBox="0 0 6 3" ><path d="M0 0h6l-3 3z" fill="#4a3a10"/></svg>
<div class="sep" style="left:691px;top:93px;height:20px"></div>
<svg style="left:697px;top:95px" width="16" height="16" viewBox="0 0 16 16" ><defs><linearGradient id="gh28" x1="0" y1="0" x2="0" y2="1"><stop offset="0" stop-color="#fdeac3"/><stop offset="0.5" stop-color="#f9cb80"/><stop offset="1" stop-color="#efa544"/></linearGradient></defs><circle cx="8" cy="8" r="7.300" fill="url(#gh28)" stroke="#b59a7c" stroke-width="0.9"/><text x="8" y="12.300" text-anchor="middle" font-family="Liberation Sans,sans-serif" font-size="12.500" fill="#6b4423" stroke="#6b4423" stroke-width="0.250">?</text></svg>
<div class="sep" style="left:719px;top:93px;height:20px"></div>
<div class="a" style="left:722px;top:92px;width:22px;height:22px;background:#ece8e1;border:1px solid #b9af8a"></div>
<svg style="left:727px;top:95px" width="12" height="16" viewBox="0 0 12 16" ><rect x="0" y="0" width="5" height="1.800" fill="#10109a"/><path d="M0.500 3v12" stroke="#000" stroke-width="1"/><rect x="3.200" y="3.200" width="5" height="1.700" fill="#10109a"/><path d="M4.700 5.300v9.300M4.700 7.200h2.300M4.700 10.100h2.300M4.700 13h2.300" stroke="#000" stroke-width="1.100" fill="none"/><rect x="7.200" y="6.300" width="4.800" height="1.800" fill="#10109a"/><rect x="7.200" y="9.200" width="4.800" height="1.800" fill="#10109a"/><rect x="7.200" y="12.100" width="4.800" height="1.800" fill="#10109a"/><rect x="3.200" y="15" width="5" height="1" fill="#10109a"/></svg>
<div class="sep" style="left:746px;top:93px;height:20px"></div>
<svg style="left:753px;top:95px" width="16" height="16" viewBox="0 0 16 16" ><rect x="0.500" y="0.500" width="15" height="4" fill="#fff" stroke="#777" stroke-width="0.9"/><rect x="0.500" y="5.500" width="15" height="4" fill="#fff" stroke="#777" stroke-width="0.9"/><rect x="0.500" y="10.500" width="15" height="4" fill="#fff" stroke="#777" stroke-width="0.9"/><rect x="12" y="1.500" width="2.500" height="2" fill="#444"/><rect x="12" y="6.500" width="2.500" height="2" fill="#444"/><rect x="12" y="11.500" width="2.500" height="2" fill="#444"/></svg>
<div class="a" style="left:265px;top:120px;width:181px;height:250px;border:1px solid #b3aa84;background:#fff"></div>
<div class="a" style="left:266px;top:121px;width:163px;height:20px;background:#d8d2b4"></div>
<div class="hl" style="left:266px;top:141px;width:163px;background:#b0a882"></div>
<div class="t " style="left:270px;top:125px;color:#2a2712">Наименование</div>
<svg style="left:412px;top:128px" width="11" height="7" viewBox="0 0 11 7" ><path d="M4 0.5h3M2.5 3h6M0.5 5.5h10" stroke="#d2c27c" stroke-width="1.4"/></svg>
<div class="a" style="left:429px;top:121px;width:16px;height:248px;background:linear-gradient(90deg,#fdfcf7,#f5f2e4);border-left:1px solid #b9b18c"></div>
<div class="a" style="left:429px;top:121px;width:16px;height:21px;background:linear-gradient(90deg,#fbf9ef,#ebe5cb);border-left:1px solid #b9b18c;border-bottom:1px solid #b9b18c"></div>
<svg style="left:434px;top:128px" width="7" height="6" viewBox="0 0 7 6" ><path d="M3.5 0l3.5 6h-7z" fill="#8a8a8a"/></svg>
<div class="a" style="left:429px;top:238px;width:16px;height:13px;background:linear-gradient(90deg,#f7f3e2,#e9e1c0);border:1px solid #c6bd98;border-right:none"></div>
<div class="a" style="left:436px;top:243px;width:3px;height:3px;border-radius:2px;background:#cfc7a5"></div>
<div class="a" style="left:429px;top:349px;width:16px;height:20px;background:linear-gradient(90deg,#fbf9ef,#ebe5cb);border-left:1px solid #b9b18c;border-top:1px solid #b9b18c"></div>
<svg style="left:434px;top:356px" width="7" height="6" viewBox="0 0 7 6" ><path d="M3.5 6l3.5-6h-7z" fill="#8a8a8a"/></svg>
<svg style="left:275px;top:145px" width="9" height="9" viewBox="0 0 9 9" ><circle cx="4.5" cy="4.5" r="4" fill="#fff" stroke="#9a9a9a" stroke-width="0.9"/><path d="M2.5 4.5h4" stroke="#666" stroke-width="1"/></svg>
<svg style="left:290px;top:144px" width="14" height="12" viewBox="0 0 14 12" ><defs><linearGradient id="gf29" x1="0" y1="0" x2="0" y2="1"><stop offset="0" stop-color="#fce79a"/><stop offset="1" stop-color="#f6d068"/></linearGradient></defs><path d="M0.500 3.600L1.900 0.700H6.100L7.500 2.800H12.900Q13.500 2.800 13.500 3.400V10.500Q13.500 11.300 12.700 11.300H1.300Q0.500 11.300 0.500 10.500z" fill="#f7d777" stroke="#d9983a" stroke-width="1" stroke-linejoin="round"/><path d="M1.100 4.500H12.900V10.700H1.100z" fill="url(#gf29)"/><path d="M1 3.700H13" stroke="#e3ad52" stroke-width="0.600"/><path d="M1.100 4.400H12.900" stroke="#fdf2c4" stroke-width="0.700"/></svg>
<div class="a" style="left:309px;top:142px;width:109px;height:19px;background:#4f69c5"></div>
<div class="t " style="left:312px;top:146px;color:#fff">Типы номенклатуры</div>
<svg style="left:294px;top:164px" width="9" height="9" viewBox="0 0 9 9" ><circle cx="4.5" cy="4.5" r="4" fill="#fff" stroke="#9a9a9a" stroke-width="0.9"/><path d="M2.5 4.5h4" stroke="#666" stroke-width="1"/><path d="M4.5 2.5v4" stroke="#666" stroke-width="1"/></svg>
<svg style="left:309px;top:163px" width="14" height="12" viewBox="0 0 14 12" ><defs><linearGradient id="gf30" x1="0" y1="0" x2="0" y2="1"><stop offset="0" stop-color="#fce79a"/><stop offset="1" stop-color="#f6d068"/></linearGradient></defs><path d="M0.500 3.600L1.900 0.700H6.100L7.500 2.800H12.900Q13.500 2.800 13.500 3.400V10.500Q13.500 11.300 12.700 11.300H1.300Q0.500 11.300 0.500 10.500z" fill="#f7d777" stroke="#d9983a" stroke-width="1" stroke-linejoin="round"/><path d="M1.100 4.500H12.900V10.700H1.100z" fill="url(#gf30)"/><path d="M1 3.700H13" stroke="#e3ad52" stroke-width="0.600"/><path d="M1.100 4.400H12.900" stroke="#fdf2c4" stroke-width="0.700"/></svg>
<div class="t " style="left:330px;top:165px;">Автозапчасти</div>
<div class="a" style="left:451px;top:120px;width:397px;height:250px;border:1px solid #b3aa84;background:#fff"></div>
<div class="a" style="left:452px;top:121px;width:379px;height:20px;background:#f4f0d8"></div>
<div class="a" style="left:535px;top:121px;width:118px;height:20px;background:#d8d2b4"></div>
<div class="vl" style="left:490px;top:121px;height:230px;"></div>
<div class="vl" style="left:534px;top:121px;height:230px;"></div>
<div class="vl" style="left:653px;top:121px;height:230px;"></div>
<div class="vl" style="left:725px;top:121px;height:230px;"></div>
<div class="vl" style="left:790px;top:121px;height:230px;"></div>
<div class="hl" style="left:452px;top:141px;width:379px;background:#b0a882"></div>
<div class="t hd" style="left:496px;top:125px;">Код</div>
<div class="t " style="left:539px;top:125px;color:#2a2712">Наименование</div>
<svg style="left:635px;top:128px" width="11" height="7" viewBox="0 0 11 7" ><path d="M4 0.5h3M2.5 3h6M0.5 5.5h10" stroke="#d2c27c" stroke-width="1.4"/></svg>
<div class="t hd" style="left:658px;top:125px;">Вид номен<span class="el">…</span></div>
<div class="t hd" style="left:730px;top:125px;">Основная<span class="el">…</span></div>
<div class="t hd" style="left:795px;top:125px;width:40px;overflow:hidden">Признак</div>
<div class="hl" style="left:452px;top:160px;width:379px;"></div>
<svg style="left:472px;top:147px" width="13" height="11" viewBox="0 0 13 11" ><rect x="0.500" y="0.500" width="9" height="3" fill="#8fbae2" stroke="#46668c" stroke-width="1"/><circle cx="10" cy="8" r="2.500" fill="#f8d232" stroke="#b79a14" stroke-width="0.900"/></svg>
<div class="t " style="left:496px;top:146px;">00010</div>
<div class="t " style="left:539px;top:146px;">Нематериальный ак<span class="el">…</span></div>
<div class="t " style="left:658px;top:146px;">Прочие акт<span class="el">…</span></div>
<div class="t " style="left:730px;top:146px;">шт</div>
<div class="t " style="left:795px;top:146px;">Товар</div>
<div class="hl" style="left:452px;top:179px;width:379px;"></div>
<svg style="left:472px;top:166px" width="13" height="11" viewBox="0 0 13 11" ><rect x="0.500" y="0.500" width="9" height="3" fill="#8fbae2" stroke="#46668c" stroke-width="1"/><circle cx="10" cy="8" r="2.500" fill="#f8d232" stroke="#b79a14" stroke-width="0.900"/></svg>
<div class="t " style="left:496px;top:165px;">00022</div>
<div class="t " style="left:539px;top:165px;">Номерные агрегаты</div>
<div class="t " style="left:658px;top:165px;">Номерные <span class="el">…</span></div>
<div class="t " style="left:730px;top:165px;">шт</div>
<div class="t " style="left:795px;top:165px;">Товар</div>
<div class="hl" style="left:452px;top:198px;width:379px;"></div>
<svg style="left:472px;top:185px" width="13" height="11" viewBox="0 0 13 11" ><rect x="0.500" y="0.500" width="9" height="3" fill="#8fbae2" stroke="#46668c" stroke-width="1"/><circle cx="10" cy="8" r="2.500" fill="#f8d232" stroke="#b79a14" stroke-width="0.900"/></svg>
<div class="t " style="left:496px;top:184px;">00031</div>
<div class="t " style="left:539px;top:184px;">Опции</div>
<div class="t " style="left:658px;top:184px;">Опции авт<span class="el">…</span></div>
<div class="t " style="left:730px;top:184px;">шт</div>
<div class="t " style="left:795px;top:184px;">Товар</div>
<div class="hl" style="left:452px;top:217px;width:379px;"></div>
<svg style="left:472px;top:204px" width="13" height="11" viewBox="0 0 13 11" ><rect x="0.500" y="0.500" width="9" height="3" fill="#8fbae2" stroke="#46668c" stroke-width="1"/><circle cx="10" cy="8" r="2.500" fill="#f8d232" stroke="#b79a14" stroke-width="0.900"/></svg>
<div class="t " style="left:496px;top:203px;">00009</div>
<div class="t " style="left:539px;top:203px;">Основное средство</div>
<div class="t " style="left:658px;top:203px;">Прочие акт<span class="el">…</span></div>
<div class="t " style="left:730px;top:203px;">шт</div>
<div class="t " style="left:795px;top:203px;">Товар</div>
<div class="hl" style="left:452px;top:236px;width:379px;"></div>
<svg style="left:472px;top:223px" width="13" height="11" viewBox="0 0 13 11" ><rect x="0.500" y="0.500" width="9" height="3" fill="#8fbae2" stroke="#46668c" stroke-width="1"/><circle cx="10" cy="8" r="2.500" fill="#f8d232" stroke="#b79a14" stroke-width="0.900"/></svg>
<div class="t " style="left:496px;top:222px;">00003</div>
<div class="t " style="left:539px;top:222px;">Размерный</div>
<div class="t " style="left:658px;top:222px;">Товар</div>
<div class="t " style="left:730px;top:222px;">шт</div>
<div class="t " style="left:795px;top:222px;">Товар</div>
<div class="hl" style="left:452px;top:255px;width:379px;"></div>
<svg style="left:472px;top:242px" width="13" height="11" viewBox="0 0 13 11" ><rect x="0.500" y="0.500" width="9" height="3" fill="#8fbae2" stroke="#46668c" stroke-width="1"/><circle cx="10" cy="8" r="2.500" fill="#f8d232" stroke="#b79a14" stroke-width="0.900"/></svg>
<div class="t " style="left:496px;top:241px;">00004</div>
<div class="t " style="left:539px;top:241px;">Серийный</div>
<div class="t " style="left:658px;top:241px;">Товар</div>
<div class="t " style="left:730px;top:241px;">-</div>
<div class="t " style="left:795px;top:241px;">Товар</div>
<div class="hl" style="left:452px;top:274px;width:379px;"></div>
<svg style="left:472px;top:261px" width="13" height="11" viewBox="0 0 13 11" ><rect x="0.500" y="0.500" width="9" height="3" fill="#8fbae2" stroke="#46668c" stroke-width="1"/><circle cx="10" cy="8" r="2.500" fill="#f8d232" stroke="#b79a14" stroke-width="0.900"/></svg>
<div class="t " style="left:496px;top:260px;">00012</div>
<div class="t " style="left:539px;top:260px;">Спецодежда</div>
<div class="t " style="left:658px;top:260px;">Прочие акт<span class="el">…</span></div>
<div class="t " style="left:730px;top:260px;">шт</div>
<div class="t " style="left:795px;top:260px;">Товар</div>
<div class="hl" style="left:452px;top:293px;width:379px;"></div>
<svg style="left:472px;top:280px" width="13" height="11" viewBox="0 0 13 11" ><rect x="0.500" y="0.500" width="9" height="3" fill="#8fbae2" stroke="#46668c" stroke-width="1"/><circle cx="10" cy="8" r="2.500" fill="#f8d232" stroke="#b79a14" stroke-width="0.900"/></svg>
<div class="t " style="left:496px;top:279px;">00006</div>
<div class="t " style="left:539px;top:279px;">Тара</div>
<div class="t " style="left:658px;top:279px;">Тара</div>
<div class="t " style="left:730px;top:279px;">шт</div>
<div class="t " style="left:795px;top:279px;">Товар</div>
<div class="hl" style="left:452px;top:312px;width:379px;"></div>
<svg style="left:472px;top:299px" width="13" height="11" viewBox="0 0 13 11" ><rect x="0.500" y="0.500" width="9" height="3" fill="#8fbae2" stroke="#46668c" stroke-width="1"/><circle cx="10" cy="8" r="2.500" fill="#f8d232" stroke="#b79a14" stroke-width="0.900"/></svg>
<div class="a" style="left:535px;top:294px;width:118px;height:18px;background:#4f69c5;box-shadow:inset 0 0 0 1px #d8d6b4;outline:1px dotted #111;outline-offset:-1px"></div>
<div class="t " style="left:496px;top:298px;">00005</div>
<div class="t " style="left:539px;top:298px;color:#fff">Услуга</div>
<div class="t " style="left:658px;top:298px;">Услуга</div>
<div class="t " style="left:730px;top:298px;">-</div>
<div class="t " style="left:795px;top:298px;">Услуга</div>
<div class="hl" style="left:452px;top:331px;width:379px;"></div>
<svg style="left:472px;top:318px" width="13" height="11" viewBox="0 0 13 11" ><rect x="0.500" y="0.500" width="9" height="3" fill="#8fbae2" stroke="#46668c" stroke-width="1"/><circle cx="10" cy="8" r="2.500" fill="#f8d232" stroke="#b79a14" stroke-width="0.900"/></svg>
<div class="t " style="left:496px;top:317px;">00021</div>
<div class="t " style="left:539px;top:317px;">Шины</div>
<div class="t " style="left:658px;top:317px;">Шины</div>
<div class="t " style="left:730px;top:317px;">шт</div>
<div class="t " style="left:795px;top:317px;">Товар</div>
<div class="hl" style="left:452px;top:350px;width:379px;"></div>
<svg style="left:472px;top:337px" width="13" height="11" viewBox="0 0 13 11" ><rect x="0.500" y="0.500" width="9" height="3" fill="#8fbae2" stroke="#46668c" stroke-width="1"/><circle cx="10" cy="8" r="2.500" fill="#f8d232" stroke="#b79a14" stroke-width="0.900"/></svg>
<div class="t " style="left:496px;top:336px;">00001</div>
<div class="t " style="left:539px;top:336px;">Штучный</div>
<div class="t " style="left:658px;top:336px;">Товар</div>
<div class="t " style="left:730px;top:336px;">шт</div>
<div class="t " style="left:795px;top:336px;">Товар</div>
<div class="a" style="left:831px;top:121px;width:16px;height:232px;background:linear-gradient(90deg,#fdfcf7,#f5f2e4);border-left:1px solid #b9b18c"></div>
<div class="a" style="left:831px;top:121px;width:16px;height:21px;background:linear-gradient(90deg,#fbf9ef,#ebe5cb);border-left:1px solid #b9b18c;border-bottom:1px solid #b9b18c"></div>
<svg style="left:836px;top:128px" width="7" height="6" viewBox="0 0 7 6" ><path d="M3.5 0l3.5 6h-7z" fill="#8a8a8a"/></svg>
<div class="a" style="left:831px;top:230px;width:16px;height:13px;background:linear-gradient(90deg,#f7f3e2,#e9e1c0);border:1px solid #c6bd98;border-right:none"></div>
<div class="a" style="left:838px;top:235px;width:3px;height:3px;border-radius:2px;background:#cfc7a5"></div>
<div class="a" style="left:831px;top:332px;width:16px;height:21px;background:linear-gradient(90deg,#fbf9ef,#ebe5cb);border-left:1px solid #b9b18c;border-top:1px solid #b9b18c"></div>
<svg style="left:836px;top:339px" width="7" height="6" viewBox="0 0 7 6" ><path d="M3.5 6l3.5-6h-7z" fill="#8a8a8a"/></svg>
<div class="a" style="left:452px;top:353px;width:395px;height:16px;background:linear-gradient(#fdfcf7,#f5f2e4);border-top:1px solid #b9b18c"></div>
<div class="a" style="left:452px;top:353px;width:21px;height:16px;background:linear-gradient(#fbf9ef,#ebe5cb);border-top:1px solid #b9b18c;border-right:1px solid #b9b18c"></div>
<svg style="left:459px;top:358px" width="6" height="7" viewBox="0 0 6 7" ><path d="M0 3.5l6-3.5v7z" fill="#bbb"/></svg>
<div class="a" style="left:473px;top:353px;width:289px;height:16px;background:linear-gradient(#f7f3e2,#e9e1c0);border:1px solid #c6bd98;border-left:none"></div>
<div class="a" style="left:615px;top:359px;width:3px;height:3px;border-radius:2px;background:#cfc7a5"></div>
<div class="a" style="left:810px;top:353px;width:21px;height:16px;background:linear-gradient(#fbf9ef,#ebe5cb);border-top:1px solid #b9b18c;border-left:1px solid #b9b18c"></div>
<svg style="left:818px;top:358px" width="6" height="7" viewBox="0 0 6 7" ><path d="M6 3.5l-6-3.5v7z" fill="#8a8a8a"/></svg>
<div class="a" style="left:831px;top:353px;width:16px;height:16px;background:#f4f1e2;border-top:1px solid #b9b18c;border-left:1px solid #b9b18c"></div>
<div class="t " style="left:265px;top:381px;color:#5366cb">Услуга</div>
<svg style="left:635px;top:380px" width="16" height="16" viewBox="0 0 16 16" ><path d="M2.500 2.700H0.900V11.200H2.500" stroke="#5b87b0" stroke-width="0.9" fill="none"/><rect x="2.500" y="1.200" width="8.500" height="3" rx="1.300" fill="#dfeaf5" stroke="#5b87b0" stroke-width="0.9"/><rect x="2.500" y="5.300" width="8.500" height="3" rx="1.300" fill="#dfeaf5" stroke="#5b87b0" stroke-width="0.9"/><rect x="2.500" y="9.500" width="7" height="3.200" rx="1.300" fill="#dfeaf5" stroke="#5b87b0" stroke-width="0.9"/><path d="M7.500 1.600V14L10 11.800L11.600 15L13 14.300L11.500 11.200H14.800z" fill="#fff" stroke="#111" stroke-width="0.9" stroke-linejoin="round"/></svg>
<div class="t " style="left:653px;top:381px;font-weight:bold;font-size:12.4px;color:#452c02">Выбрать</div>
<div class="sep" style="left:711px;top:378px;height:20px"></div>
<svg style="left:717px;top:380px" width="16" height="15" viewBox="0 0 16 15" ><path d="M0 0.800h8M0 3h8M0 5.200h5.500M0 7.400h5.500M0 9.600h4M0 11.800h4" stroke="#6f9fd8" stroke-width="1.100"/><path d="M0 13.700h4" stroke="#9fbfe6" stroke-width="1"/><rect x="5.200" y="3.400" width="9" height="7" fill="#fff" stroke="#c3ced9" stroke-width="0.600"/><path d="M7 5.300h5.500M7 7.100h5.500" stroke="#7cc47c" stroke-width="0.900"/><rect x="3.600" y="9.800" width="12" height="4.200" rx="0.800" fill="#eef2f6" stroke="#3a4654" stroke-width="0.900"/><path d="M4 13.400h11.200" stroke="#2a3440" stroke-width="1"/><circle cx="13.600" cy="11.200" r="0.800" fill="#22c022"/></svg>
<div class="t br" style="left:735px;top:381px;">Печать</div>
<div class="sep" style="left:777px;top:378px;height:20px"></div>
<svg style="left:787px;top:382px" width="10" height="9" viewBox="0 0 10 9" ><path d="M1.200 1l7.600 7M8.800 1l-7.600 7" stroke="#2f6fa8" stroke-width="2.600" fill="none"/><path d="M1.600 1.400l6.800 6.200M8.400 1.400l-6.800 6.200" stroke="#4f9bd6" stroke-width="1" fill="none"/></svg>
<div class="t br" style="left:802px;top:381px;">Закрыть</div>
<svg style="left:588px;top:306px" width="12" height="19" viewBox="0 0 12 19" ><path filter="drop-shadow(1px 1px 0.6px rgba(0,0,0,0.45))" d="M0.500 0.500v15l3.500-3.300 2.600 6 2.200-1-2.600-5.800h5z" fill="#fff" stroke="#000" stroke-width="1" stroke-linejoin="round"/></svg>
</body></html>
